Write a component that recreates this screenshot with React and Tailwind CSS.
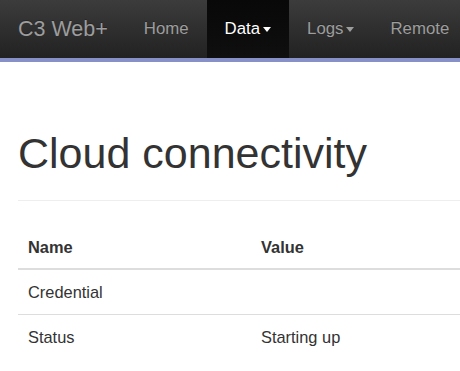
import React from "react";

const navItems = [
  { label: "Home" },
  { label: "Data", caret: true, active: true },
  { label: "Logs", caret: true },
  { label: "Remote" },
];

const rows = [
  { name: "Credential", value: "" },
  { name: "Status", value: "Starting up" },
];

const Caret = () => (
  <span className="ml-[3px] inline-block h-0 w-0 border-x-[4.5px] border-t-[5px] border-x-transparent border-t-current align-middle" />
);

const App = () => {
  return (
    <div
      className="w-[460px] h-[371px] overflow-hidden bg-white text-[#333]"
      style={{ fontFamily: '"Liberation Sans", Arial, sans-serif' }}
    >
      <nav className="h-[62px] border-b-4 border-[#8890c8] bg-gradient-to-b from-[#3c3c3c] to-[#222]">
        <div className="flex h-[58px] whitespace-nowrap pl-[18px]">
          <a className="pr-[18px] pt-[17px] text-[21.5px] leading-[24px] text-[#9d9d9d] [text-shadow:0_-1px_0_rgba(0,0,0,0.25)]">
            C3 Web+
          </a>
          {navItems.map((item) => (
            <a
              key={item.label}
              className={`flex h-[58px] items-center px-[18px] text-[16.8px] ${
                item.active
                  ? "bg-gradient-to-b from-[#080808] to-[#0f0f0f] text-white"
                  : "text-[#9d9d9d]"
              } [text-shadow:0_-1px_0_rgba(0,0,0,0.25)]`}
            >
              {item.label}
              {item.caret && <Caret />}
            </a>
          ))}
        </div>
      </nav>

      <div className="pl-[18px]">
        <div className="mt-[68px] border-b border-[#eee] pb-[24px]">
          <h1 className="whitespace-nowrap text-[43px] leading-[46px] font-normal">
            Cloud connectivity
          </h1>
        </div>

        <div className="mt-[25px] text-[16.4px]">
          <div className="grid grid-cols-[233px_1fr] border-b-2 border-[#ddd] font-bold">
            <div className="px-[10px] py-[9.5px] leading-[23px]">Name</div>
            <div className="px-[10px] py-[9.5px] leading-[23px]">Value</div>
          </div>
          {rows.map((row, i) => (
            <div
              key={row.name}
              className={`grid grid-cols-[233px_1fr] ${
                i > 0 ? "border-t border-[#ddd]" : ""
              }`}
            >
              <div className="px-[10px] py-[10.5px] leading-[23px]">{row.name}</div>
              <div className="px-[10px] py-[10.5px] leading-[23px]">{row.value}</div>
            </div>
          ))}
        </div>
      </div>
    </div>
  );
};

export default App;
